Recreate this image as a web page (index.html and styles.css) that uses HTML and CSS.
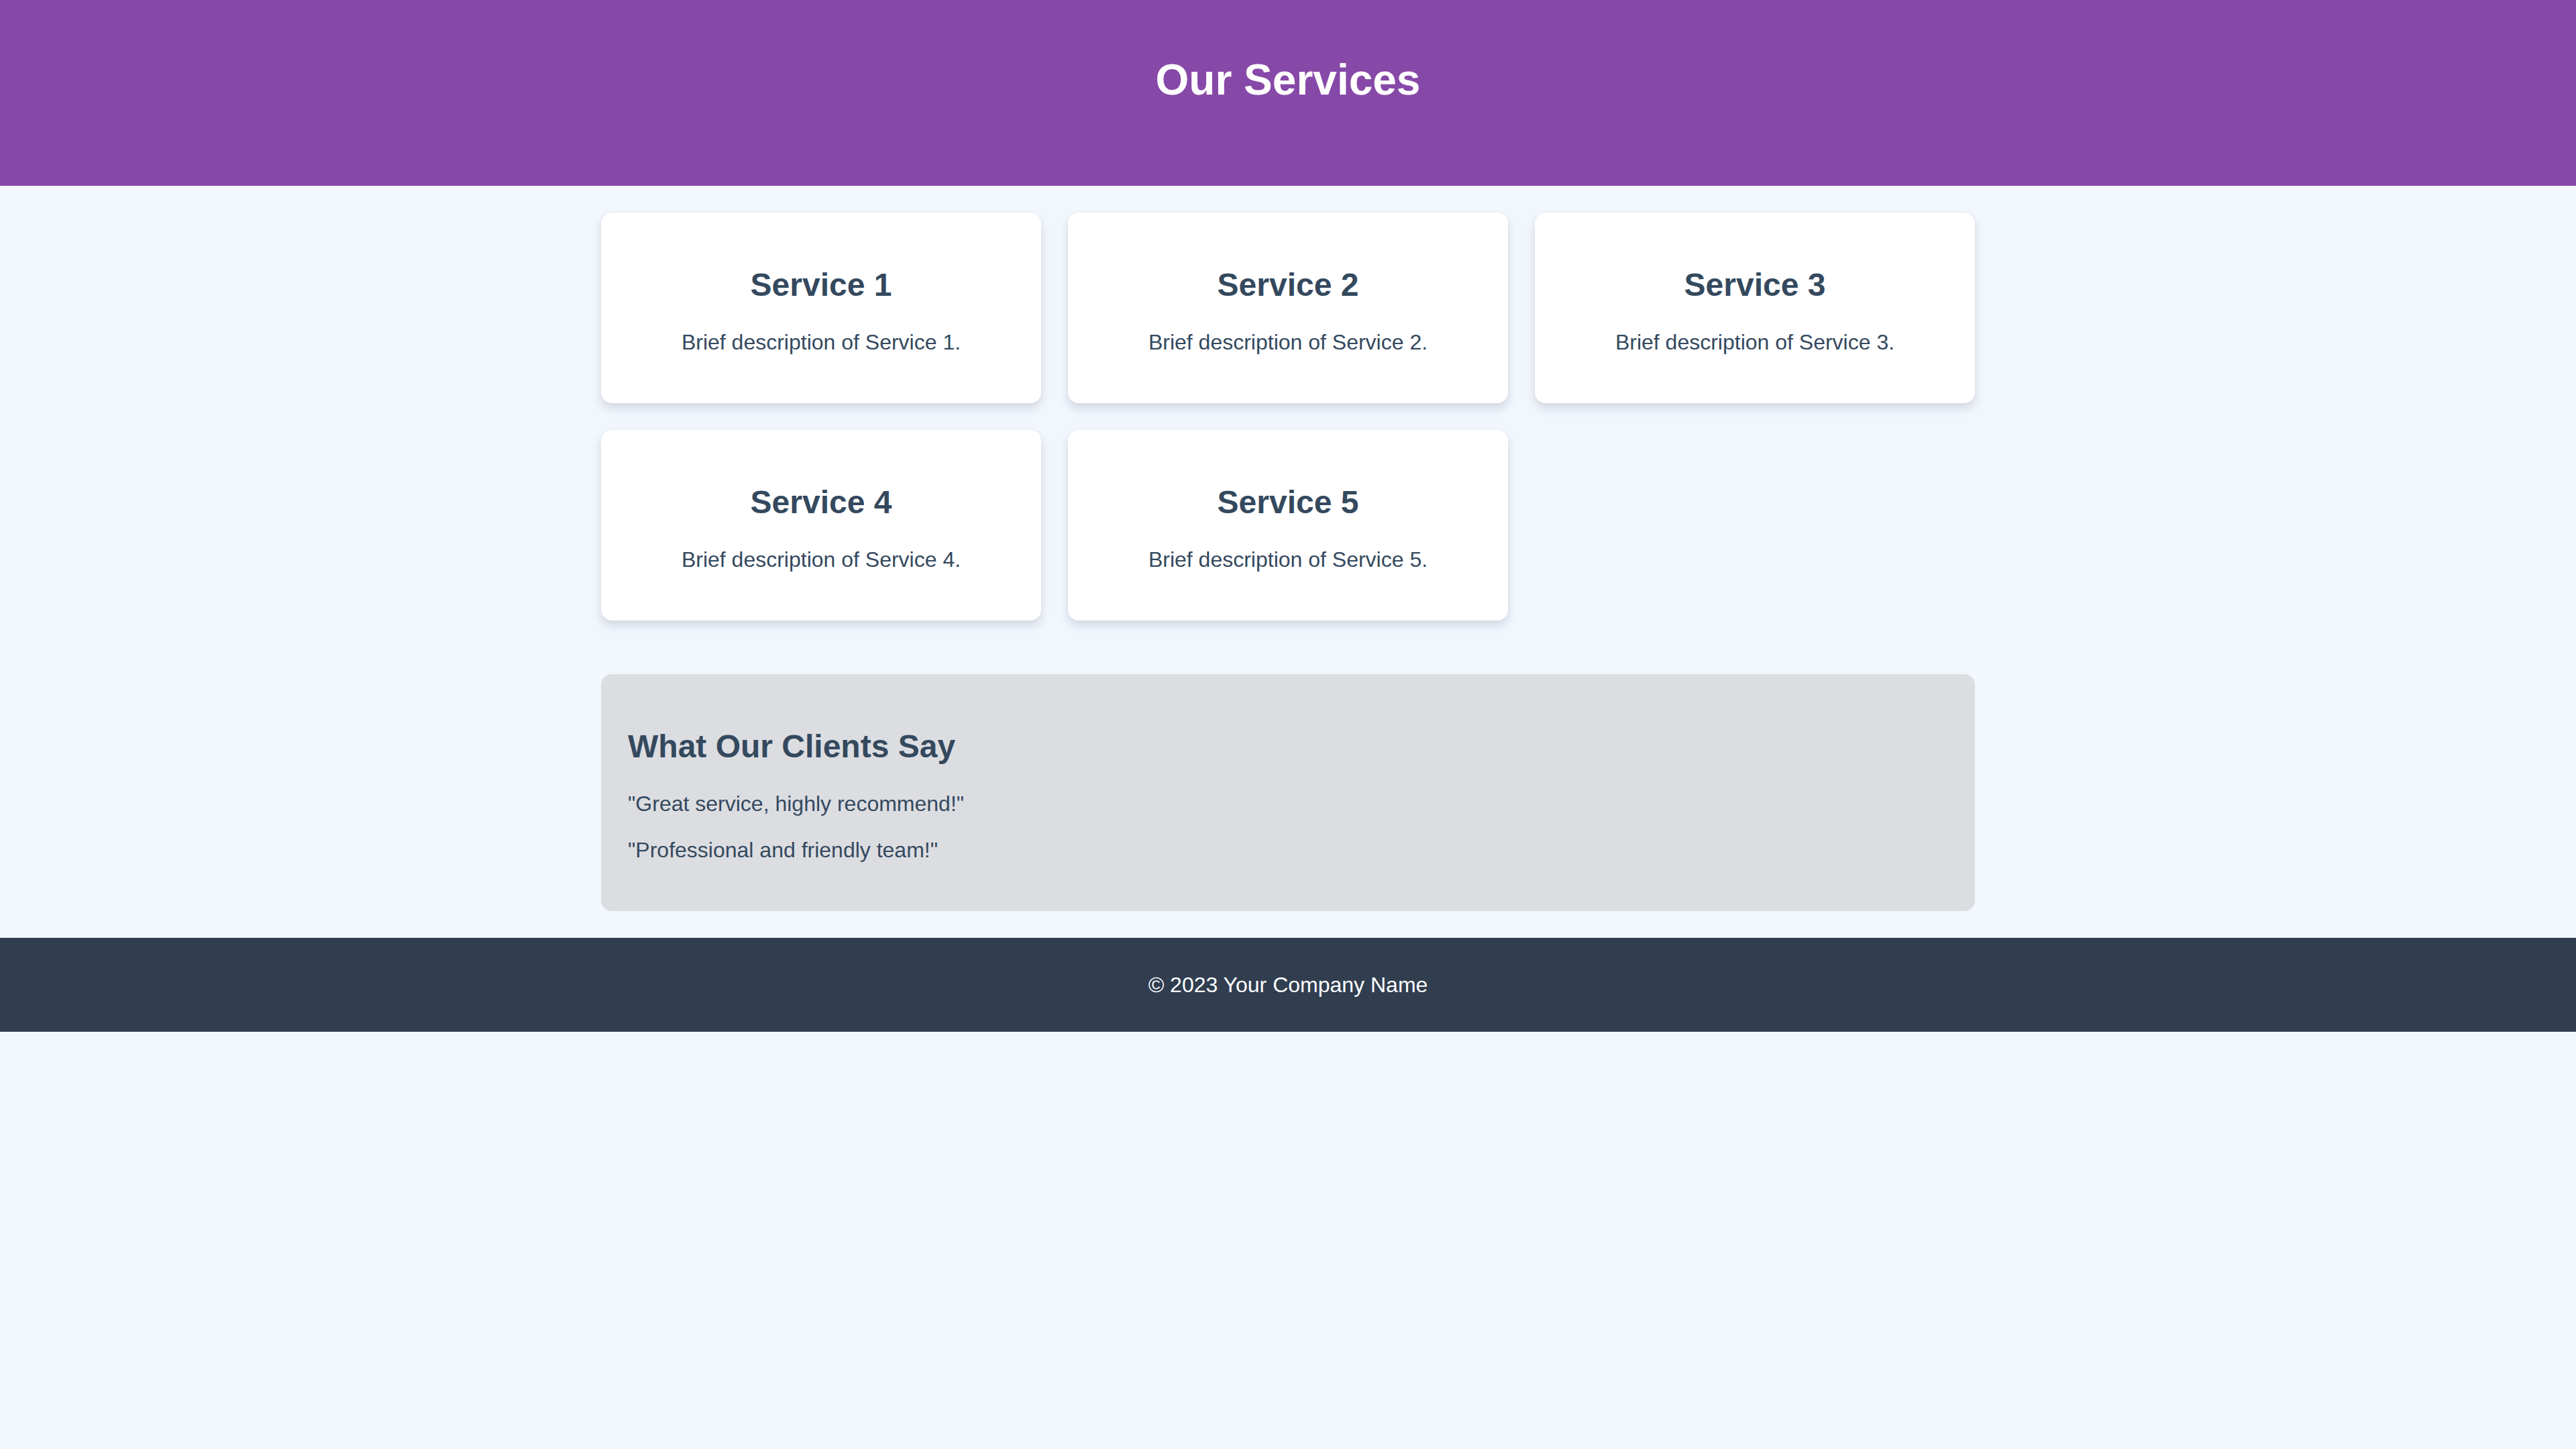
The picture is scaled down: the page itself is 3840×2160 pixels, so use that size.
FILE: index.html
```html
<!DOCTYPE html>
<html lang="en">
<head>
<meta charset="utf-8">
<title>Our Services</title>
<link rel="stylesheet" href="styles.css">
</head>
<body>
<header class="site-header">
  <h1 class="site-title">Our Services</h1>
</header>
<main class="container">
  <section class="services">
    <div class="card"><h3 class="card-title">Service 1</h3><p class="card-text">Brief description of Service 1.</p></div>
    <div class="card"><h3 class="card-title">Service 2</h3><p class="card-text">Brief description of Service 2.</p></div>
    <div class="card"><h3 class="card-title">Service 3</h3><p class="card-text">Brief description of Service 3.</p></div>
    <div class="card"><h3 class="card-title">Service 4</h3><p class="card-text">Brief description of Service 4.</p></div>
    <div class="card"><h3 class="card-title">Service 5</h3><p class="card-text">Brief description of Service 5.</p></div>
  </section>
  <section class="testimonials">
    <h2 class="testimonials-title">What Our Clients Say</h2>
    <p class="quote">"Great service, highly recommend!"</p>
    <p class="quote">"Professional and friendly team!"</p>
  </section>
</main>
<footer class="site-footer">
  <p class="footer-text">&copy; 2023 Your Company Name</p>
</footer>
</body>
</html>
```

FILE: styles.css
```css
html, body {
  margin: 0;
  padding: 0;
}
body {
  background: #f2f6fd;
  color: #34495e;
  font-family: "Liberation Sans", Arial, sans-serif;
  font-size: 32px;
  line-height: normal;
  min-height: 2160px;
}
.site-header {
  background: #8749a8;
  color: #ffffff;
  text-align: center;
  padding: 82px 40px 121px;
}
.site-title {
  margin: 0;
  font-size: 64px;
  font-weight: 700;
  line-height: normal;
}
.container {
  width: 2048px;
  margin: 0 auto;
  padding: 40px 0;
}
.services {
  display: grid;
  grid-template-columns: repeat(3, 1fr);
  gap: 40px;
}
.card {
  background: #ffffff;
  border-radius: 16px;
  box-shadow: 0 8px 14px rgba(30, 45, 70, 0.14), 0 0 4px rgba(30, 45, 70, 0.04);
  padding: 40px;
  text-align: center;
}
.card-title {
  margin: 40px 0;
  font-size: 48px;
  font-weight: 700;
  line-height: normal;
}
.card-text {
  margin: 32px 0;
  font-size: 32px;
}
.testimonials {
  margin-top: 80px;
  background: #dcdde1;
  border-radius: 16px;
  padding: 40px;
}
.testimonials-title {
  margin: 40px 0;
  font-size: 48px;
  font-weight: 700;
  line-height: normal;
}
.quote {
  margin: 32px 0;
  font-size: 32px;
}
.site-footer {
  background: #313e50;
  color: #ffffff;
  text-align: center;
  padding: 46px 40px;
}
.footer-text {
  margin: 0;
  font-size: 32px;
  line-height: 48px;
}
```
